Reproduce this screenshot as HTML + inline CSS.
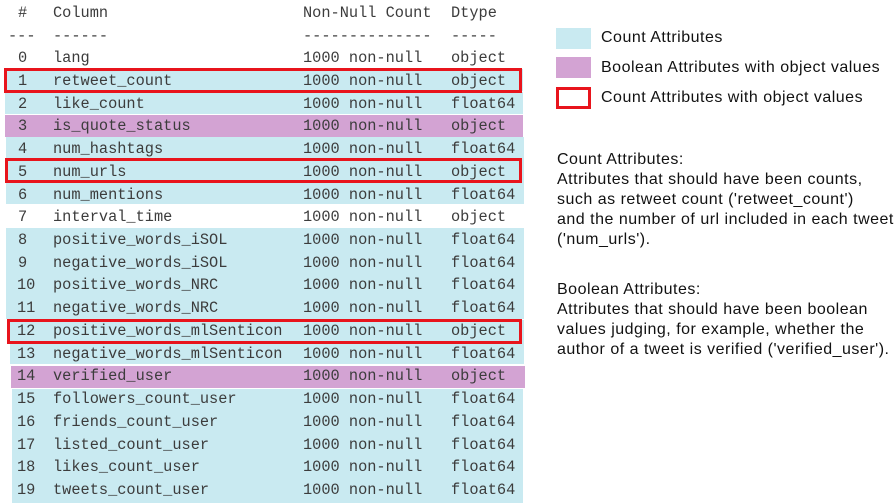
<!DOCTYPE html>
<html><head><style>
body{margin:0;width:896px;height:503px;background:#fff;position:relative;overflow:hidden;font-family:"Liberation Mono",monospace;color:#3c3c3c}
.r{position:absolute;left:0;height:23px;font-size:15.3px;line-height:23px;white-space:pre;margin-top:2px}
.b{position:absolute;height:22px}
.c{background:#c9eaf1}.p{background:#d3a3d3}
.t{position:absolute;white-space:pre}
.box{position:absolute;border:3px solid #e8141c;box-sizing:border-box}
.s{position:absolute;font-family:"Liberation Sans",sans-serif;font-size:16px;letter-spacing:0.5px;color:#111;line-height:20px;white-space:pre}
</style></head><body>
<div class="b c" style="left:5px;top:69px;width:518px"></div>
<div class="b c" style="left:5px;top:92px;width:518px"></div>
<div class="b p" style="left:5px;top:115px;width:518px"></div>
<div class="b c" style="left:6px;top:137px;width:518px;height:67px"></div>
<div class="b c" style="left:6px;top:228px;width:518px;height:91px"></div>
<div class="b c" style="left:10px;top:320px;width:514px;height:44px"></div>
<div class="b p" style="left:11px;top:366px;width:514px"></div>
<div class="b c" style="left:12px;top:389px;width:511px;height:114px"></div>
<div class="box" style="left:4px;top:68px;width:518px;height:25px"></div>
<div class="box" style="left:5px;top:158px;width:517px;height:25px"></div>
<div class="box" style="left:7px;top:319px;width:515px;height:25px"></div>
<div class="r" style="top:0px"><span class="t" style="left:18px">#</span><span class="t" style="left:53px">Column</span><span class="t" style="left:303px">Non-Null Count</span><span class="t" style="left:451px">Dtype</span></div>
<div class="r" style="top:23px"><span class="t" style="left:8px">---</span><span class="t" style="left:53px">------</span><span class="t" style="left:303px">--------------</span><span class="t" style="left:451px">-----</span></div>
<div class="r" style="top:45px"><span class="t" style="left:18px">0</span><span class="t" style="left:53px">lang</span><span class="t" style="left:303px">1000 non-null</span><span class="t" style="left:451px">object</span></div>
<div class="r" style="top:68px"><span class="t" style="left:18px">1</span><span class="t" style="left:53px">retweet_count</span><span class="t" style="left:303px">1000 non-null</span><span class="t" style="left:451px">object</span></div>
<div class="r" style="top:91px"><span class="t" style="left:18px">2</span><span class="t" style="left:53px">like_count</span><span class="t" style="left:303px">1000 non-null</span><span class="t" style="left:451px">float64</span></div>
<div class="r" style="top:113px"><span class="t" style="left:18px">3</span><span class="t" style="left:53px">is_quote_status</span><span class="t" style="left:303px">1000 non-null</span><span class="t" style="left:451px">object</span></div>
<div class="r" style="top:136px"><span class="t" style="left:18px">4</span><span class="t" style="left:53px">num_hashtags</span><span class="t" style="left:303px">1000 non-null</span><span class="t" style="left:451px">float64</span></div>
<div class="r" style="top:159px"><span class="t" style="left:18px">5</span><span class="t" style="left:53px">num_urls</span><span class="t" style="left:303px">1000 non-null</span><span class="t" style="left:451px">object</span></div>
<div class="r" style="top:182px"><span class="t" style="left:18px">6</span><span class="t" style="left:53px">num_mentions</span><span class="t" style="left:303px">1000 non-null</span><span class="t" style="left:451px">float64</span></div>
<div class="r" style="top:204px"><span class="t" style="left:18px">7</span><span class="t" style="left:53px">interval_time</span><span class="t" style="left:303px">1000 non-null</span><span class="t" style="left:451px">object</span></div>
<div class="r" style="top:227px"><span class="t" style="left:18px">8</span><span class="t" style="left:53px">positive_words_iSOL</span><span class="t" style="left:303px">1000 non-null</span><span class="t" style="left:451px">float64</span></div>
<div class="r" style="top:250px"><span class="t" style="left:18px">9</span><span class="t" style="left:53px">negative_words_iSOL</span><span class="t" style="left:303px">1000 non-null</span><span class="t" style="left:451px">float64</span></div>
<div class="r" style="top:272px"><span class="t" style="left:17px">10</span><span class="t" style="left:53px">positive_words_NRC</span><span class="t" style="left:303px">1000 non-null</span><span class="t" style="left:451px">float64</span></div>
<div class="r" style="top:295px"><span class="t" style="left:17px">11</span><span class="t" style="left:53px">negative_words_NRC</span><span class="t" style="left:303px">1000 non-null</span><span class="t" style="left:451px">float64</span></div>
<div class="r" style="top:318px"><span class="t" style="left:17px">12</span><span class="t" style="left:53px">positive_words_mlSenticon</span><span class="t" style="left:303px">1000 non-null</span><span class="t" style="left:451px">object</span></div>
<div class="r" style="top:341px"><span class="t" style="left:17px">13</span><span class="t" style="left:53px">negative_words_mlSenticon</span><span class="t" style="left:303px">1000 non-null</span><span class="t" style="left:451px">float64</span></div>
<div class="r" style="top:363px"><span class="t" style="left:17px">14</span><span class="t" style="left:53px">verified_user</span><span class="t" style="left:303px">1000 non-null</span><span class="t" style="left:451px">object</span></div>
<div class="r" style="top:386px"><span class="t" style="left:17px">15</span><span class="t" style="left:53px">followers_count_user</span><span class="t" style="left:303px">1000 non-null</span><span class="t" style="left:451px">float64</span></div>
<div class="r" style="top:409px"><span class="t" style="left:17px">16</span><span class="t" style="left:53px">friends_count_user</span><span class="t" style="left:303px">1000 non-null</span><span class="t" style="left:451px">float64</span></div>
<div class="r" style="top:432px"><span class="t" style="left:17px">17</span><span class="t" style="left:53px">listed_count_user</span><span class="t" style="left:303px">1000 non-null</span><span class="t" style="left:451px">float64</span></div>
<div class="r" style="top:454px"><span class="t" style="left:17px">18</span><span class="t" style="left:53px">likes_count_user</span><span class="t" style="left:303px">1000 non-null</span><span class="t" style="left:451px">float64</span></div>
<div class="r" style="top:477px"><span class="t" style="left:17px">19</span><span class="t" style="left:53px">tweets_count_user</span><span class="t" style="left:303px">1000 non-null</span><span class="t" style="left:451px">float64</span></div>

<div class="c" style="position:absolute;left:556px;top:28px;width:35px;height:21px"></div>
<div class="p" style="position:absolute;left:556px;top:57px;width:35px;height:21px"></div>
<div class="box" style="left:556px;top:87px;width:35px;height:22px"></div>
<div class="s" style="left:601px;top:28px">Count Attributes</div>
<div class="s" style="left:601px;top:58px">Boolean Attributes with object values</div>
<div class="s" style="left:601px;top:88px">Count Attributes with object values</div>
<div class="s" style="left:557px;top:150px">Count Attributes:
Attributes that should have been counts,
such as retweet count ('retweet_count')
and the number of url included in each tweet
('num_urls').</div>
<div class="s" style="left:557px;top:280px">Boolean Attributes:
Attributes that should have been boolean
values judging, for example, whether the
author of a tweet is verified ('verified_user').</div>
</body></html>
